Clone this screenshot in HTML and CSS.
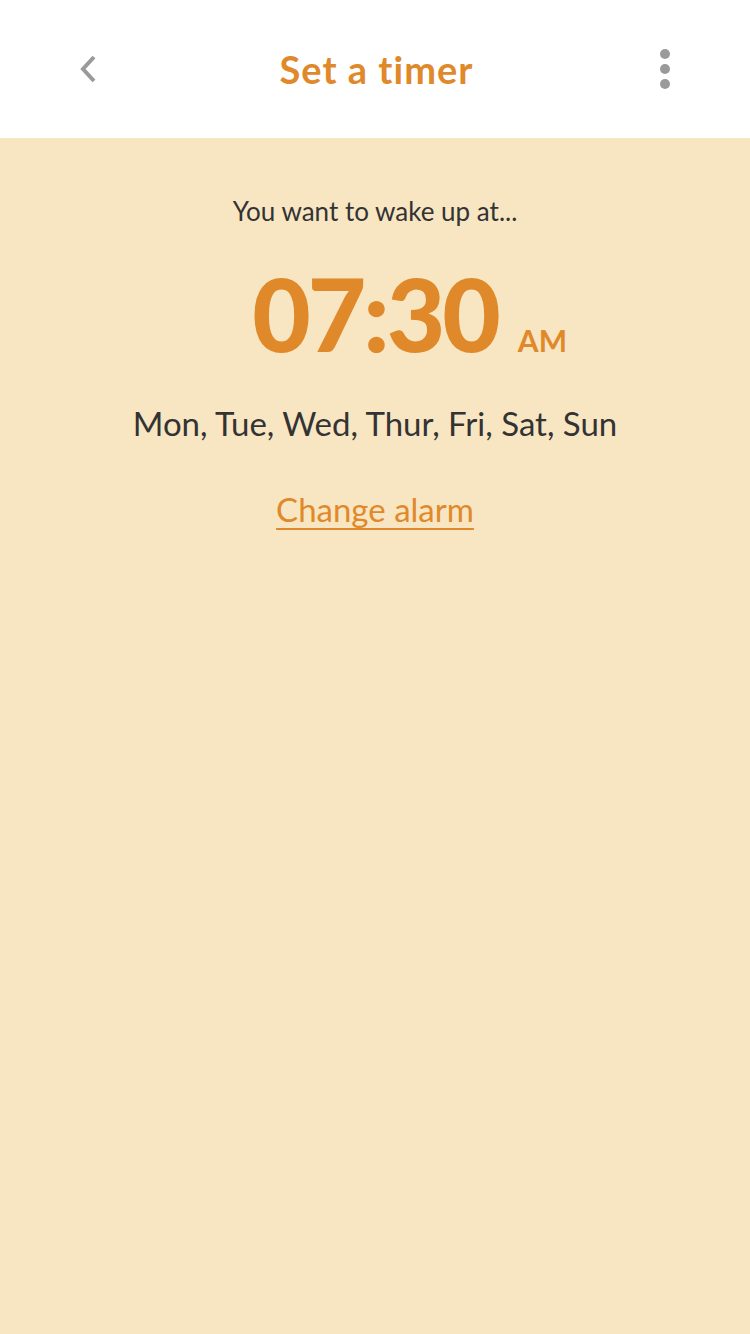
FILE: index.html
```html
<!DOCTYPE html>
<html>
<head>
<meta charset="utf-8">
<link rel="stylesheet" href="styles.css">
</head>
<body>
<div class="app">
  <header class="topbar">
    <button class="icon-btn back" aria-label="Back">
      <svg width="24" height="32" viewBox="0 0 24 32"><path d="M18 4 L7 16 L18 28" fill="none" stroke="#9a9a9a" stroke-width="4"/></svg>
    </button>
    <h1 class="title">Set a timer</h1>
    <button class="icon-btn more" aria-label="More">
      <svg width="12" height="42" viewBox="0 0 12 42"><circle cx="6" cy="6" r="5" fill="#9a9a9a"/><circle cx="6" cy="21" r="5" fill="#9a9a9a"/><circle cx="6" cy="36" r="5" fill="#9a9a9a"/></svg>
    </button>
  </header>
  <main class="content">
    <p class="lead">You want to wake up at...</p>
    <div class="time"><span></span><span class="digits">07:30</span><span class="ampm">AM</span></div>
    <p class="days">Mon, Tue, Wed, Thur, Fri, Sat, Sun</p>
    <a class="change" href="#">Change alarm</a>
  </main>
</div>
</body>
</html>
```
FILE: styles.css
```css
* { box-sizing: border-box; }
html, body { margin: 0; padding: 0; }
body { font-family: Lato, "Noto Sans", sans-serif; background: #f8e6c2; }
.app { width: 750px; height: 1334px; display: flex; flex-direction: column; }
.topbar { height: 138px; background: #fff; display: flex; align-items: center; justify-content: space-between; padding: 0 79px 0 76px; }
.icon-btn { background: none; border: 0; padding: 0; display: flex; align-items: center; }
.title { margin: 0 0 0 -6px; font-size: 38px; font-weight: 700; color: #e0892a; letter-spacing: 1px; }
.content { flex: 1; background: #f8e6c2; display: flex; flex-direction: column; align-items: center; padding-top: 55px; }
.lead { margin: 0; font-size: 26px; color: #333; line-height: 36px; }
.time { width: 100%; display: grid; grid-template-columns: 1fr auto 1fr; align-items: baseline; color: #e0892a; margin-top: 29px; }
.digits { font-size: 101px; font-weight: 900; line-height: 110px; letter-spacing: -3px; }
.ampm { font-size: 30px; font-weight: 700; margin-left: 20px; }
.days { margin: 33px 0 0; font-size: 33px; color: #333; line-height: 44px; }
.change { margin-top: 42px; font-size: 33px; color: #e0892a; text-decoration: underline; text-underline-offset: 6px; text-decoration-thickness: 2px; line-height: 44px; }
```
